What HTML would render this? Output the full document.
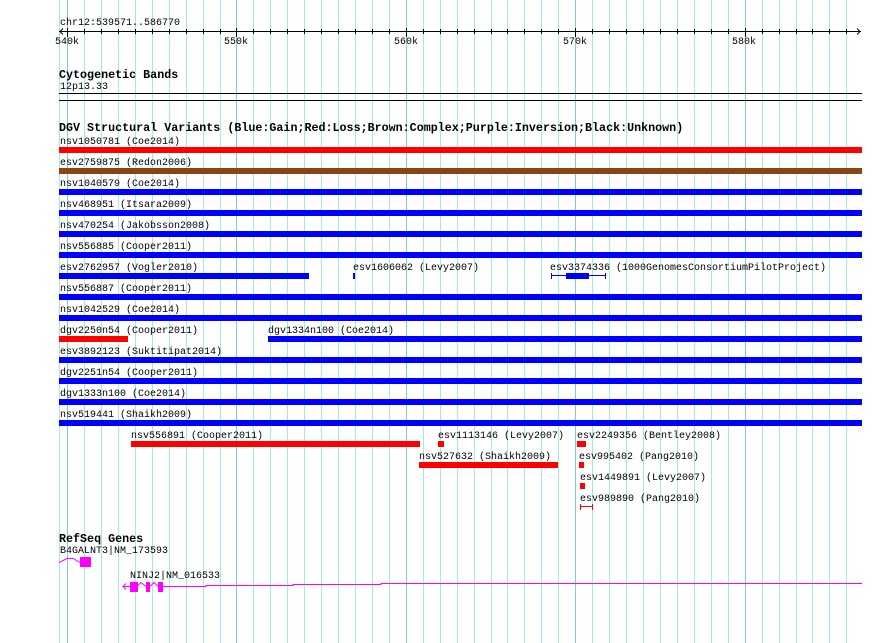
<!DOCTYPE html>
<html><head><meta charset="utf-8"><style>
html,body{margin:0;padding:0;background:#fff;width:890px;height:643px;overflow:hidden}
svg{display:block}
text{font-family:"Liberation Mono","DejaVu Sans Mono",monospace;font-size:10px;fill:#000}
.b{font-weight:bold;font-size:11.7px}
</style></head><body>
<svg width="890" height="643" viewBox="0 0 890 643" xmlns="http://www.w3.org/2000/svg">
<rect x="0" y="0" width="890" height="643" fill="#fff"/>
<path stroke="#a6e6ec" stroke-width="1" fill="none" d="M59.5 0V643M84.5 0V643M101.5 0V643M118.5 0V643M135.5 0V643M152.5 0V643M169.5 0V643M186.5 0V643M203.5 0V643M220.5 0V643M253.5 0V643M270.5 0V643M287.5 0V643M304.5 0V643M321.5 0V643M338.5 0V643M355.5 0V643M372.5 0V643M389.5 0V643M423.5 0V643M440.5 0V643M457.5 0V643M474.5 0V643M491.5 0V643M507.5 0V643M524.5 0V643M541.5 0V643M558.5 0V643M592.5 0V643M609.5 0V643M626.5 0V643M643.5 0V643M660.5 0V643M677.5 0V643M694.5 0V643M711.5 0V643M728.5 0V643M762.5 0V643M779.5 0V643M796.5 0V643M812.5 0V643M829.5 0V643M846.5 0V643"/>
<path stroke="#86c4ec" stroke-width="1" fill="none" d="M67.5 0V643M236.5 0V643M406.5 0V643M575.5 0V643M745.5 0V643"/>
<!-- ruler -->
<text x="60" y="25">chr12:539571..586770</text>
<path stroke="#000" stroke-width="1" fill="none" d="M59 31.5H861M63 28.5L60 31.5L63 34.5M857 28.5L860 31.5L857 34.5
M67.5 28V37M84.5 29V34M101.5 29V34M118.5 29V34M135.5 29V34M152.5 29V34M169.5 29V34M186.5 29V34M203.5 29V34M220.5 29V34M236.5 28V37M253.5 29V34M270.5 29V34M287.5 29V34M304.5 29V34M321.5 29V34M338.5 29V34M355.5 29V34M372.5 29V34M389.5 29V34M406.5 28V37M423.5 29V34M440.5 29V34M457.5 29V34M474.5 29V34M491.5 29V34M507.5 29V34M524.5 29V34M541.5 29V34M558.5 29V34M575.5 28V37M592.5 29V34M609.5 29V34M626.5 29V34M643.5 29V34M660.5 29V34M677.5 29V34M694.5 29V34M711.5 29V34M728.5 29V34M745.5 28V37M762.5 29V34M779.5 29V34M796.5 29V34M812.5 29V34M829.5 29V34M846.5 29V34"/>
<text x="55" y="44">540k</text>
<text x="224" y="44">550k</text>
<text x="394" y="44">560k</text>
<text x="563" y="44">570k</text>
<text x="732" y="44">580k</text>
<!-- cyto -->
<text class="b" x="59" y="78">Cytogenetic Bands</text>
<text x="60" y="89">12p13.33</text>
<rect x="59" y="93" width="803" height="7" fill="#fff" fill-opacity="0"/>
<path stroke="#000" stroke-width="1" d="M59 93.5H862M59 100.5H862"/>
<!-- DGV -->
<text class="b" x="59" y="131">DGV Structural Variants (Blue:Gain;Red:Loss;Brown:Complex;Purple:Inversion;Black:Unknown)</text>
<text x="60" y="144">nsv1050781 (Coe2014)</text><rect x="59" y="147" width="803" height="6" fill="#ff0000"/>
<text x="60" y="165">esv2759875 (Redon2006)</text><rect x="59" y="168" width="803" height="6" fill="#8b4513"/>
<text x="60" y="186">nsv1040579 (Coe2014)</text><rect x="59" y="189" width="803" height="6" fill="#0000ff"/>
<text x="60" y="207">nsv468951 (Itsara2009)</text><rect x="59" y="210" width="803" height="6" fill="#0000ff"/>
<text x="60" y="228">nsv470254 (Jakobsson2008)</text><rect x="59" y="231" width="803" height="6" fill="#0000ff"/>
<text x="60" y="249">nsv556885 (Cooper2011)</text><rect x="59" y="252" width="803" height="6" fill="#0000ff"/>
<text x="60" y="270">esv2762957 (Vogler2010)</text><rect x="59" y="273" width="250" height="6" fill="#0000ff"/>
<text x="353" y="270">esv1606062 (Levy2007)</text><rect x="353" y="273" width="2" height="6" fill="#0000ff"/>
<text x="550" y="270">esv3374336 (1000GenomesConsortiumPilotProject)</text>
<rect x="566" y="273" width="23" height="6" fill="#0000ff"/>
<path stroke="#0000ff" stroke-width="1" d="M551 275.5H606M551.5 273V279M605.5 273V279"/>
<text x="60" y="291">nsv556887 (Cooper2011)</text><rect x="59" y="294" width="803" height="6" fill="#0000ff"/>
<text x="60" y="312">nsv1042529 (Coe2014)</text><rect x="59" y="315" width="803" height="6" fill="#0000ff"/>
<text x="60" y="333">dgv2250n54 (Cooper2011)</text><rect x="59" y="336" width="69" height="6" fill="#ff0000"/>
<text x="268" y="333">dgv1334n100 (Coe2014)</text><rect x="268" y="336" width="594" height="6" fill="#0000ff"/>
<text x="60" y="354">esv3892123 (Suktitipat2014)</text><rect x="59" y="357" width="803" height="6" fill="#0000ff"/>
<text x="60" y="375">dgv2251n54 (Cooper2011)</text><rect x="59" y="378" width="803" height="6" fill="#0000ff"/>
<text x="60" y="396">dgv1333n100 (Coe2014)</text><rect x="59" y="399" width="803" height="6" fill="#0000ff"/>
<text x="60" y="417">nsv519441 (Shaikh2009)</text><rect x="59" y="420" width="803" height="6" fill="#0000ff"/>
<text x="131" y="438">nsv556891 (Cooper2011)</text><rect x="131" y="441" width="289" height="6" fill="#ff0000"/>
<text x="438" y="438">esv1113146 (Levy2007)</text><rect x="438" y="441" width="6" height="6" fill="#ff0000"/>
<text x="577" y="438">esv2249356 (Bentley2008)</text><rect x="577" y="441" width="9" height="6" fill="#ff0000"/>
<text x="419" y="459">nsv527632 (Shaikh2009)</text><rect x="419" y="462" width="139" height="6" fill="#ff0000"/>
<text x="579" y="459">esv995402 (Pang2010)</text><rect x="579" y="462" width="5" height="6" fill="#ff0000"/>
<text x="580" y="480">esv1449891 (Levy2007)</text><rect x="580" y="483" width="5" height="6" fill="#ff0000"/>
<text x="580" y="501">esv989890 (Pang2010)</text>
<path stroke="#ff0000" stroke-width="1" d="M580 506.5H593M580.5 504V510M592.5 504V510"/>
<!-- RefSeq -->
<text class="b" x="59" y="542">RefSeq Genes</text>
<text x="60" y="553">B4GALNT3|NM_173593</text>
<path stroke="#ff00ff" stroke-width="1" fill="none" d="M59 562.5L67 558.5L73 558.5L80 562.5"/>
<rect x="80" y="557" width="11" height="10" fill="#ff00ff"/>
<text x="130" y="578">NINJ2|NM_016533</text>
<path stroke="#ff00ff" stroke-width="1" fill="none" d="M123 586.5H130M126 583.5L123 586.5L126 589.5M137 586.5L141 582.5L146 586.5M150 586.5L154 582.5L158 586.5M162 586.5H206V585.5H293V584.5H381V583.5H862"/>
<rect x="130" y="582" width="8" height="10" fill="#ff00ff"/>
<rect x="146" y="582" width="4" height="10" fill="#ff00ff"/>
<rect x="158" y="582" width="5" height="10" fill="#ff00ff"/>
</svg>
</body></html>
